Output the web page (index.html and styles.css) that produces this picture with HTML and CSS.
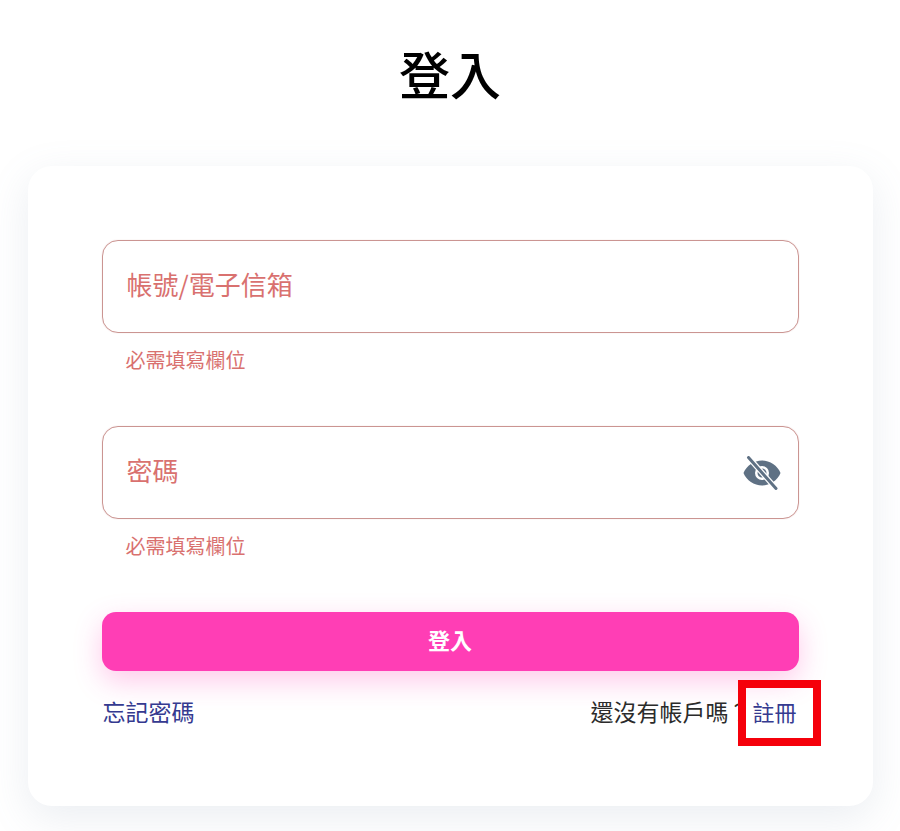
FILE: index.html
```html
<!DOCTYPE html>
<html lang="zh-Hant">
<head>
  <meta charset="UTF-8" />
  <meta name="viewport" content="width=device-width, initial-scale=1.0" />
  <title>登入</title>
  <link rel="stylesheet" href="styles.css">
</head>
<body>
  <h1 class="title">登入</h1>

  <main class="card">
    <form class="login-form">
      <div class="field">
        <div class="input-box">
          <span class="placeholder">帳號/電子信箱</span>
        </div>
        <p class="helper">必需填寫欄位</p>
      </div>

      <div class="field">
        <div class="input-box">
          <span class="placeholder">密碼</span>
          <svg class="eye-icon" viewBox="0 0 38 34" width="38" height="34" aria-hidden="true">
            <path fill="#5f7184" fill-rule="evenodd" d="M19 4.500C11 4.500 3.500 9.500 .5 17c3 7.500 10.500 12.500 18.500 12.500S34.500 24.500 37.500 17C34.500 9.500 27 4.500 19 4.500zM19 10a7 7 0 1 1 0 14 7 7 0 0 1 0-14z"/>
            <circle cx="19" cy="17" r="4.500" fill="#5f7184"/>
            <path stroke="#ffffff" stroke-width="5.500" d="M5.500 1.500 33 32.500"/>
            <path stroke="#5f7184" stroke-width="3" stroke-linecap="round" d="M5.500 1.500 33 32.500"/>
          </svg>
        </div>
        <p class="helper">必需填寫欄位</p>
      </div>

      <button type="button" class="submit-btn"><span class="btn-label">登入</span></button>

      <div class="form-footer">
        <a class="link" href="#">忘記密碼</a>
        <div class="signup">
          <span>還沒有帳戶嗎？</span><a class="link signup-link" href="#">註冊</a>
          <span class="highlight"></span>
        </div>
      </div>
    </form>
  </main>
</body>
</html>
```

FILE: styles.css
```css
* {
  box-sizing: border-box;
}
body {
  font-family: "Noto Sans CJK TC", "Noto Sans", sans-serif;
  background: #ffffff;
  color: #2b2b2b;
  margin: 0;
  height: 831px;
  overflow: hidden;
  display: flex;
  flex-direction: column;
  align-items: center;
}
.title {
  margin: 0;
  padding-top: 37px;
  height: 166px;
  font-size: 51px;
  line-height: 72px;
  font-weight: 500;
  color: #000000;
}
.card {
  width: 845px;
  height: 640px;
  background: #ffffff;
  border-radius: 24px;
  padding: 74px 74px 0;
  box-shadow: 0 12px 40px rgba(120, 140, 170, 0.15);
}
.login-form {
  display: flex;
  flex-direction: column;
}
.field {
  height: 186px;
}
.input-box {
  height: 93px;
  border: 1px solid #cb9592;
  border-radius: 16px;
  padding: 0 17px 0 24px;
  display: flex;
  align-items: center;
  justify-content: space-between;
  box-shadow: 0 0 1px rgba(203, 149, 146, 0.6);
}
.placeholder {
  font-size: 26px;
  line-height: 36px;
  margin-bottom: 6px;
  color: #d9716f;
}
.eye-icon {
  display: block;
}
.helper {
  margin: 14px 0 0 24px;
  font-size: 20px;
  line-height: 26px;
  color: #d9716f;
}
.submit-btn {
  height: 59px;
  border: none;
  border-radius: 14px;
  background: #ff3eb5;
  color: #ffffff;
  font-family: inherit;
  font-size: 22px;
  font-weight: 700;
  box-shadow: 0 10px 28px rgba(255, 62, 181, 0.28);
}
.btn-label {
  display: block;
  margin-bottom: 5px;
}
.form-footer {
  margin-top: 23px;
  padding: 0 1px;
  display: flex;
  justify-content: space-between;
  align-items: center;
  font-size: 23px;
  line-height: 34px;
}
.link {
  color: #353a90;
  text-decoration: none;
}
.signup {
  position: relative;
  display: flex;
  align-items: center;
}
.signup-link {
  font-size: 22px;
  margin: 0 1px;
}
.highlight {
  position: absolute;
  right: -23px;
  top: -14px;
  width: 83px;
  height: 66px;
  border: 8px solid #f5000b;
}
```
